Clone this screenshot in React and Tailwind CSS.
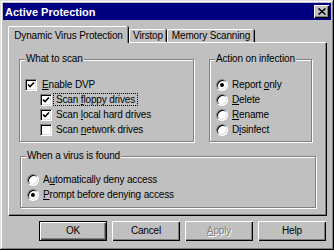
import React from "react";

const F = "font-['Liberation_Sans',Arial,sans-serif]";

function U({ children }) {
  return <span className="underline underline-offset-[1px] decoration-[1px]">{children}</span>;
}

function Check({ checked }) {
  return (
    <span className="w-[12px] h-[12px] shrink-0 bg-white border border-t-[#808080] border-l-[#808080] border-r-white border-b-white shadow-[inset_1px_1px_#000,inset_-1px_-1px_#dfdfdf] flex items-center justify-center">
      {checked && (
        <svg width="8" height="8" viewBox="0 0 8 8">
          <path d="M1 3.5 L3 5.5 L7 1.5" fill="none" stroke="#000" strokeWidth="1.6" />
        </svg>
      )}
    </span>
  );
}

function Radio({ checked }) {
  return (
    <span className="w-[12px] h-[12px] shrink-0 rounded-full bg-white border border-t-[#808080] border-l-[#808080] border-r-white border-b-white shadow-[inset_1px_1px_#000,inset_-1px_-1px_#dfdfdf] flex items-center justify-center">
      {checked && <span className="w-[4px] h-[4px] rounded-full bg-black" />}
    </span>
  );
}

function Group({ label, className, children }) {
  return (
    <div className={"relative border border-[#808080] shadow-[inset_1px_1px_#fff,1px_1px_#fff] " + className}>
      <span className="absolute left-[5px] top-[-7px] bg-[#c0c0c0] px-[1px] leading-[12px]">{label}</span>
      {children}
    </div>
  );
}

function Row({ children, className = "gap-[5px]" }) {
  return <div className={"flex items-center h-[15px] " + className}>{children}</div>;
}

function Button({ children, def, disabled }) {
  return (
    <div
      className={
        "w-[68px] h-[20px] flex items-center justify-center bg-[#c0c0c0] " +
        (def
          ? "border border-black shadow-[inset_1px_1px_#fff,inset_-1px_-1px_#404040,inset_-2px_-2px_#808080]"
          : "shadow-[inset_1px_1px_#fff,inset_-1px_-1px_#000,inset_-2px_-2px_#808080]") +
        (disabled ? " text-[#808080] [text-shadow:1px_1px_#fff]" : " text-black")
      }
    >
      {children}
    </div>
  );
}

export default function App() {
  return (
    <div className={"w-[334px] h-[250px] bg-[#c0c0c0] p-[3px] text-[10px] tracking-[-0.15px] leading-[12px] text-black shadow-[inset_-1px_-1px_#000,inset_1px_1px_#dfdfdf,inset_-2px_-2px_#808080,inset_2px_2px_#fff] flex flex-col " + F}>
      {/* Title bar */}
      <div className="h-[17px] bg-[#000080] flex items-center justify-between pl-[2px] pr-[2px]">
        <span className="text-white font-bold text-[11px] tracking-normal">Active Protection</span>
        <span className="w-[15px] h-[13px] bg-[#c0c0c0] shadow-[inset_1px_1px_#fff,inset_-1px_-1px_#000,inset_-2px_-2px_#808080] flex items-center justify-center">
          <svg width="8" height="7" viewBox="0 0 8 7">
            <path d="M0.5 0.5 L7.5 6.5 M7.5 0.5 L0.5 6.5" stroke="#000" strokeWidth="1.5" />
          </svg>
        </span>
      </div>

      <div className="px-[5px] pt-[6px] flex flex-col">
        {/* Tabs */}
        <div className="flex items-end h-[16px] relative z-10">
          <div className="h-[17px] mb-[-1px] w-[120px] bg-[#c0c0c0] border-l border-t border-white rounded-tl-[2px] rounded-tr-[2px] shadow-[inset_-1px_0_#808080,1px_0_#000] flex items-start justify-center pt-[3px]">
            Dynamic Virus Protection
          </div>
          <div className="h-[13px] w-[37px] ml-[1px] border-l border-t border-white rounded-t-[2px] shadow-[inset_-1px_0_#808080,1px_0_#000] flex items-center justify-center">
            Virstop
          </div>
          <div className="h-[13px] w-[87px] ml-[1px] border-l border-t border-white rounded-t-[2px] shadow-[inset_-1px_0_#808080,1px_0_#000] flex items-center justify-center">
            Memory Scanning
          </div>
        </div>

        {/* Panel */}
        <div className="h-[173px] w-[318px] border-l border-t border-white shadow-[inset_-1px_-1px_#808080,1px_1px_#000] flex flex-col">
          <div className="flex mt-[16px]">
            <Group label="What to scan" className="ml-[10px] w-[175px] h-[83px] pt-[17px] pl-[5px]">
              <Row>
                <Check checked />
                <span><U>E</U>nable DVP</span>
              </Row>
              <div className="pl-[15px]">
                <Row className="gap-[1px]">
                  <Check checked />
                  <span className="border border-dotted border-black px-[2px] leading-[11px]">Scan <U>f</U>loppy drives</span>
                </Row>
                <Row className="gap-[1px]">
                  <Check checked />
                  <span className="border border-transparent px-[2px] leading-[11px]">Scan <U>l</U>ocal hard drives</span>
                </Row>
                <Row className="gap-[1px]">
                  <Check />
                  <span className="border border-transparent px-[2px] leading-[11px]">Scan <U>n</U>etwork drives</span>
                </Row>
              </div>
            </Group>
            <Group label="Action on infection" className="ml-[15px] w-[103px] h-[83px] pt-[17px] pl-[6px]">
              <Row className="gap-[4px]">
                <Radio checked />
                <span>Report <U>o</U>nly</span>
              </Row>
              <Row className="gap-[4px]">
                <Radio />
                <span><U>D</U>elete</span>
              </Row>
              <Row className="gap-[4px]">
                <Radio />
                <span><U>R</U>ename</span>
              </Row>
              <Row className="gap-[4px]">
                <Radio />
                <span>D<U>i</U>sinfect</span>
              </Row>
            </Group>
          </div>
          <Group label="When a virus is found" className="mt-[14px] ml-[11px] w-[296px] h-[52px] pt-[15px] pl-[6px]">
            <Row className="gap-[4px]">
              <Radio />
              <span>A<U>u</U>tomatically deny access</span>
            </Row>
            <Row className="gap-[4px]">
              <Radio checked />
              <span><U>P</U>rompt before denying access</span>
            </Row>
          </Group>
        </div>

        {/* Buttons */}
        <div className="flex justify-end gap-[5px] mt-[6px] w-[318px]">
          <Button def>OK</Button>
          <Button>Cancel</Button>
          <Button disabled><U>A</U>pply</Button>
          <Button>Help</Button>
        </div>
      </div>
    </div>
  );
}
